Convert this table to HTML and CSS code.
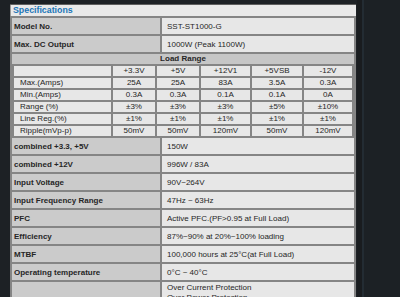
FILE: index.html
```html
<!DOCTYPE html>
<html>
<head>
<meta charset="utf-8">
<link rel="stylesheet" href="styles.css">
</head>
<body>
<div class="page">
  <div class="panel">
    <div class="title">Specifications</div>
    <table class="spec">
      <tr><td class="label">Model No.</td><td class="value">SST-ST1000-G</td></tr>
      <tr><td class="label">Max. DC Output</td><td class="value">1000W (Peak 1100W)</td></tr>
      <tr><td class="load" colspan="2">Load Range</td></tr>
      <tr><td class="subcell" colspan="2">
        <table class="load-table">
          <colgroup><col class="c0"><col class="c1"><col class="c2"><col class="c3"><col class="c4"><col class="c5"></colgroup>
          <tr><td></td><td>+3.3V</td><td>+5V</td><td>+12V1</td><td>+5VSB</td><td>-12V</td></tr>
          <tr><td class="rl">Max.(Amps)</td><td>25A</td><td>25A</td><td>83A</td><td>3.5A</td><td>0.3A</td></tr>
          <tr><td class="rl">Min.(Amps)</td><td>0.3A</td><td>0.3A</td><td>0.1A</td><td>0.1A</td><td>0A</td></tr>
          <tr><td class="rl">Range (%)</td><td>±3%</td><td>±3%</td><td>±3%</td><td>±5%</td><td>±10%</td></tr>
          <tr><td class="rl">Line Reg.(%)</td><td>±1%</td><td>±1%</td><td>±1%</td><td>±1%</td><td>±1%</td></tr>
          <tr><td class="rl">Ripple(mVp-p)</td><td>50mV</td><td>50mV</td><td>120mV</td><td>50mV</td><td>120mV</td></tr>
        </table>
      </td></tr>
      <tr><td class="label">combined +3.3, +5V</td><td class="value">150W</td></tr>
      <tr><td class="label">combined +12V</td><td class="value">996W / 83A</td></tr>
      <tr><td class="label">Input Voltage</td><td class="value">90V~264V</td></tr>
      <tr><td class="label">Input Frequency Range</td><td class="value">47Hz ~ 63Hz</td></tr>
      <tr><td class="label">PFC</td><td class="value">Active PFC.(PF&gt;0.95 at Full Load)</td></tr>
      <tr><td class="label">Efficiency</td><td class="value">87%~90% at 20%~100% loading</td></tr>
      <tr><td class="label">MTBF</td><td class="value">100,000 hours at 25°C(at Full Load)</td></tr>
      <tr><td class="label">Operating temperature</td><td class="value">0°C ~ 40°C</td></tr>
      <tr><td class="label"></td><td class="value multi">Over Current Protection<br>Over Power Protection</td></tr>
    </table>
  </div>
  <div class="gutter"></div>
  <div class="side"></div>
</div>
</body>
</html>
```

FILE: styles.css
```css
html, body {
  margin: 0;
  padding: 0;
  background: #1d2125;
  overflow: hidden;
}
.page {
  display: flex;
  height: 297px;
  width: 400px;
  font-family: "Liberation Sans", Arial, sans-serif;
}
.panel {
  margin-left: 10px;
  margin-top: 4px;
  width: 346px;
  flex: none;
  background: #8a8a8a;
  border-top: 1px solid #5e5e5e;
  align-self: flex-start;
}
.title {
  background: #e9e9e9;
  color: #1b76b8;
  font-weight: bold;
  font-size: 8.8px;
  line-height: 11px;
  height: 11px;
  padding-left: 2px;
  border-left: 1px solid #9a9a9a;
}
.spec {
  border-collapse: separate;
  border-spacing: 2px;
  width: 346px;
  table-layout: fixed;
  background: #858585;
}
.spec td {
  padding: 0;
  font-size: 8px;
  color: #262626;
}
.label {
  width: 146px;
  height: 16px;
  background: #cbcbcb;
  font-weight: bold;
  padding-left: 2px !important;
  color: #2a2a2a;
}
.value {
  background: #e7e7e7;
  padding-left: 5px !important;
  height: 16px;
}
.multi {
  vertical-align: top;
  line-height: 10px;
  padding-top: 1px !important;
  height: 30px;
}
.load {
  background: #c6c6c6;
  text-align: center;
  font-weight: bold;
  height: 10px;
  line-height: 10px;
}
.subcell {
  background: #8a8a8a;
}
.load-table {
  border-collapse: separate;
  border-spacing: 2px;
  width: 100%;
  table-layout: fixed;
  background: #858585;
  margin: -2px 0;
}
.load-table td {
  background: #e7e7e7;
  height: 10px;
  line-height: 10px;
  text-align: center;
  font-size: 8px;
  padding: 0;
}
.load-table td.rl {
  text-align: left;
  padding-left: 6px;
}
.c0 { width: 97px; }
.c1 { width: 42px; }
.c2 { width: 42px; }
.c3 { width: 49px; }
.c4 { width: 50px; }
.c5 { width: 48px; }
.gutter {
  width: 5px;
  flex: none;
  margin-left: 1px;
  background: #191c1f;
}
.side {
  flex: 1;
  border-left: 2px solid #232c33;
  background: #1c2125;
}
```
